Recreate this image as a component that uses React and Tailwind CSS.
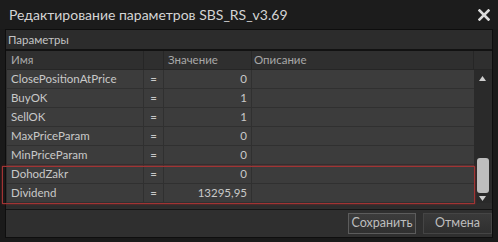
import React from "react";

const rows = [
  ["ClosePositionAtPrice", "0"],
  ["BuyOK", "1"],
  ["SellOK", "1"],
  ["MaxPriceParam", "0"],
  ["MinPriceParam", "0"],
  ["DohodZakr", "0"],
  ["Dividend", "13295,95"],
];

export default function App() {
  return (
    <div
      className="relative w-[498px] h-[242px] bg-[#1a1a1a] flex flex-col overflow-hidden"
      style={{ fontFamily: 'Lato, "Noto Sans", sans-serif' }}
    >
      {/* title */}
      <div className="h-[29px] flex items-center justify-between pl-[9px] pr-[8px] bg-[#1c1c1c]">
        <span className="text-[14px] text-[#d4d4d4] leading-none pt-[1px]">
          Редактирование параметров SBS_RS_v3.69
        </span>
        <svg width="12" height="12" viewBox="0 0 12 12" className="mt-[1px]">
          <path d="M1.5 1.5 L10.5 10.5 M10.5 1.5 L1.5 10.5" stroke="#dcdcdc" strokeWidth="2.6" strokeLinecap="square" />
        </svg>
      </div>

      {/* body */}
      <div className="mx-[5px] h-[209px] border border-[#0e0e0e] bg-[#2d2d2d] flex flex-col">
        <div className="h-[19px] flex items-center pl-[2px] text-[11.5px] text-[#c4c4c4] bg-[#2c2c2c]">
          Параметры
        </div>
        <div className="h-[2px] bg-[#121212]" />
        <div className="flex flex-col ml-[1px]">
          {/* header */}
          <div className="h-[19px] flex text-[11.5px] text-[#a8a8a8] bg-[#2f2f2f] border-b border-[#262626]">
            <div className="w-[137px] pl-[4px] flex items-center border-r border-[#262626]">Имя</div>
            <div className="w-[20px] border-r border-[#262626]" />
            <div className="w-[88px] pl-[4px] flex items-center border-r border-[#262626]">Значение</div>
            <div className="w-[222px] pl-[2px] flex items-center border-r border-[#262626]">Описание</div>
            <div className="flex-1" />
          </div>
          <div className="flex">
            <div className="flex flex-col w-[467px]">
              {rows.map(([n, v]) => (
                <div key={n} className="h-[19px] flex text-[11.5px] text-[#c9c9c9] bg-[#3c3c3c] border-b border-[#303030]">
                  <div className="w-[137px] pl-[4px] flex items-center border-r border-[#303030]">{n}</div>
                  <div className="w-[20px] flex items-center justify-center border-r border-[#303030]">=</div>
                  <div className="w-[88px] pr-[4px] flex items-center justify-end border-r border-[#303030]">{v}</div>
                  <div className="flex-1" />
                </div>
              ))}
            </div>
            {/* scrollbar */}
            <div className="flex-1 bg-[#2a2a2a] relative">
              <svg width="7" height="5" viewBox="0 0 7 5" className="absolute left-[5px] top-[6px]">
                <path d="M3.5 0 L7 5 L0 5 Z" fill="#cfcfcf" />
              </svg>
              <div className="absolute left-[3px] top-[88px] w-[12px] h-[35px] rounded-[3px] bg-[#bdbdbd]" />
              <svg width="7" height="5" viewBox="0 0 7 5" className="absolute left-[5px] top-[126px]">
                <path d="M0 0 L7 0 L3.5 5 Z" fill="#cfcfcf" />
              </svg>
            </div>
          </div>
        </div>
        <div className="flex-1" />
        <div className="h-[1px] bg-[#141414]" />
        <div className="h-[27px] flex items-center justify-end gap-[7px] bg-[#2f2f2f]">
          <button className="w-[68px] h-[21px] text-[12.5px] text-[#bebebe] border border-[#5c5c5c] bg-[linear-gradient(#3c3c3c,#303030)]">
            Сохранить
          </button>
          <button className="w-[69px] h-[21px] text-[12.5px] text-[#bebebe] border border-[#454545] bg-[linear-gradient(#3a3a3a,#2f2f2f)]">
            Отмена
          </button>
        </div>
      </div>

      {/* red highlight */}
      <div className="absolute left-[2px] top-[166px] w-[473px] h-[38px] border border-[#a13434] shadow-[0_0_2px_rgba(200,40,40,0.6)]" />
    </div>
  );
}
